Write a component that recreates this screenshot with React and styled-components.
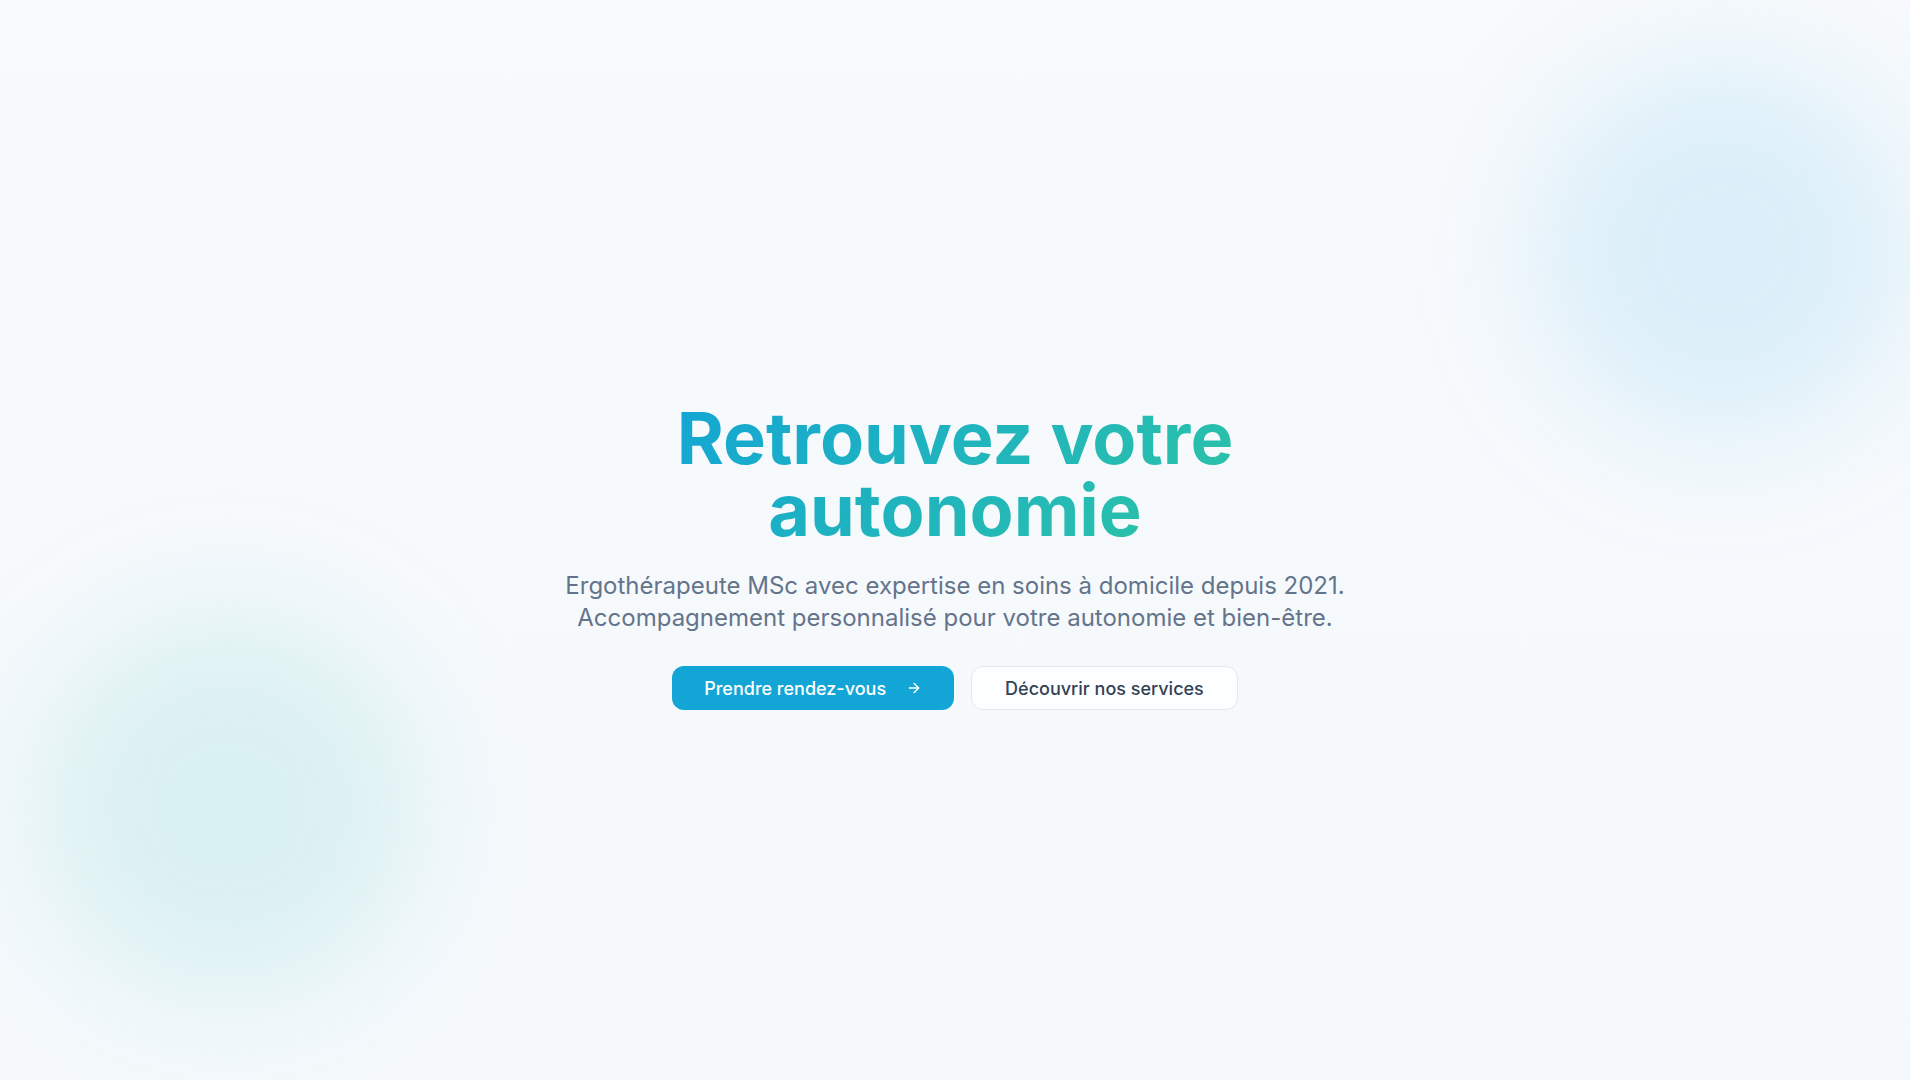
import styled, { createGlobalStyle } from "styled-components";
import { ArrowRight } from "lucide-react";

const GlobalStyle = createGlobalStyle`
    * {
        box-sizing: border-box;
    }

    html, body {
        margin: 0;
        padding: 0;
        background: #ffffff;
        font-family: "Inter", "Noto Sans", sans-serif;
        color: #334155;
    }

    ::-webkit-scrollbar {
        width: 10px;
    }

    ::-webkit-scrollbar-track {
        background: #ffffff;
    }

    ::-webkit-scrollbar-thumb {
        background: #111111;
        border: 2px solid transparent;
        background-clip: padding-box;
        border-radius: 6px;
    }
`;

const services = [
    "Évaluation à domicile",
    "Aménagement du logement",
    "Aides techniques",
    "Rééducation fonctionnelle",
    "Conseils aux proches",
    "Suivi personnalisé",
];

const App = () => {
    return (
        <>
            <GlobalStyle/>
            <PageS>
                <HeroS>
                    <BlobS $color={"rgba(14, 165, 233, 0.12)"} $top={"56px"} $right={"-4px"}/>
                    <BlobS $color={"rgba(20, 184, 166, 0.12)"} $bottom={"84px"} $left={"36px"}/>
                    <HeroContentS>
                        <TitleS>Retrouvez votre autonomie</TitleS>
                        <LeadS>
                            Ergothérapeute MSc avec expertise en soins à domicile depuis 2021.
                            Accompagnement personnalisé pour votre autonomie et bien-être.
                        </LeadS>
                        <ActionsS>
                            <PrimaryButtonS>
                                Prendre rendez-vous
                                <ArrowRight size={16} strokeWidth={2}/>
                            </PrimaryButtonS>
                            <SecondaryButtonS>Découvrir nos services</SecondaryButtonS>
                        </ActionsS>
                    </HeroContentS>
                </HeroS>

                <SectionS id={"services"}>
                    <SectionTitleS>Nos services</SectionTitleS>
                    <CardGridS>
                        {services.map((s) => (
                            <CardS key={s}>{s}</CardS>
                        ))}
                    </CardGridS>
                </SectionS>

                <SectionS id={"about"}>
                    <SectionTitleS>À propos</SectionTitleS>
                    <TextS>
                        Diplômée d'un Master en ergothérapie, j'accompagne les personnes à domicile
                        afin de maintenir et développer leur indépendance au quotidien.
                    </TextS>
                </SectionS>

                <SectionS id={"approche"}>
                    <SectionTitleS>Mon approche</SectionTitleS>
                    <TextS>Une prise en charge globale, centrée sur la personne et son environnement.</TextS>
                </SectionS>

                <SectionS id={"temoignages"}>
                    <SectionTitleS>Témoignages</SectionTitleS>
                    <TextS>Ce que disent les patients et leurs familles.</TextS>
                </SectionS>

                <SectionS id={"tarifs"}>
                    <SectionTitleS>Tarifs</SectionTitleS>
                    <TextS>Prestations remboursées selon votre assurance complémentaire.</TextS>
                </SectionS>

                <SectionS id={"contact"}>
                    <SectionTitleS>Contact</SectionTitleS>
                    <TextS>Prenez rendez-vous par téléphone ou par e-mail.</TextS>
                </SectionS>

                <FooterS>© 2025 Ergothérapie à domicile</FooterS>
            </PageS>
        </>
    );
};

// the 10px white strip on the right stands for the scrollbar gutter
const PageS = styled.div`
    border-right: 10px solid #ffffff;
    background: #f6f9fc;
`;

const HeroS = styled.section`
    position: relative;
    overflow: hidden;
    height: 100vh;
    padding: 32px 24px 0;
    display: flex;
    align-items: center;
    justify-content: center;
    background: linear-gradient(180deg, #f8fafc 0%, #f5f9fc 100%);
`;

const BlobS = styled.div`
    position: absolute;
    top: ${(p) => p.$top || "auto"};
    right: ${(p) => p.$right || "auto"};
    bottom: ${(p) => p.$bottom || "auto"};
    left: ${(p) => p.$left || "auto"};
    width: 384px;
    height: 384px;
    border-radius: 50%;
    background: ${(p) => p.$color};
    filter: blur(64px);
    pointer-events: none;
`;

const HeroContentS = styled.div`
    position: relative;
    z-index: 1;
    display: flex;
    flex-direction: column;
    align-items: center;
    text-align: center;
`;

const TitleS = styled.h1`
    margin: 0 0 24px;
    width: fit-content;
    max-width: 600px;
    font-size: 72px;
    line-height: 1;
    font-weight: 700;
    background: linear-gradient(135deg, #13a5d6 0%, #2ec5a3 100%);
    -webkit-background-clip: text;
    background-clip: text;
    color: transparent;
`;

const LeadS = styled.p`
    margin: 0 0 32px;
    max-width: 896px;
    font-size: 24px;
    line-height: 32px;
    color: #64748b;
`;

const ActionsS = styled.div`
    display: flex;
    gap: 17px;
`;

const ButtonBase = styled.button`
    height: 44px;
    padding: 0 32px;
    border-radius: 12px;
    display: inline-flex;
    align-items: center;
    justify-content: center;
    gap: 20px;
    font-family: "Inter", sans-serif;
    font-size: 18px;
    font-weight: 500;
    cursor: pointer;
`;

const PrimaryButtonS = styled(ButtonBase)`
    background: #13a5d6;
    color: #ffffff;
    border: none;
`;

const SecondaryButtonS = styled(ButtonBase)`
    padding: 0 33px;
    background: rgba(255, 255, 255, 0.8);
    color: #334155;
    border: 1px solid #e2e8f0;
`;

const SectionS = styled.section`
    min-height: 1080px;
    padding: 120px 24px;
    display: flex;
    flex-direction: column;
    align-items: center;
    gap: 32px;
`;

const SectionTitleS = styled.h2`
    margin: 0;
    font-size: 40px;
    font-weight: 700;
    color: #0f172a;
`;

const TextS = styled.p`
    margin: 0;
    max-width: 720px;
    font-size: 18px;
    line-height: 1.6;
    text-align: center;
    color: #64748b;
`;

const CardGridS = styled.div`
    display: grid;
    grid-template-columns: repeat(3, 320px);
    gap: 24px;
`;

const CardS = styled.div`
    padding: 32px;
    border-radius: 16px;
    background: #ffffff;
    border: 1px solid #e2e8f0;
    font-size: 18px;
    font-weight: 600;
`;

const FooterS = styled.footer`
    padding: 40px 24px;
    min-height: 300px;
    text-align: center;
    font-size: 14px;
    color: #94a3b8;
`;

export default App;
